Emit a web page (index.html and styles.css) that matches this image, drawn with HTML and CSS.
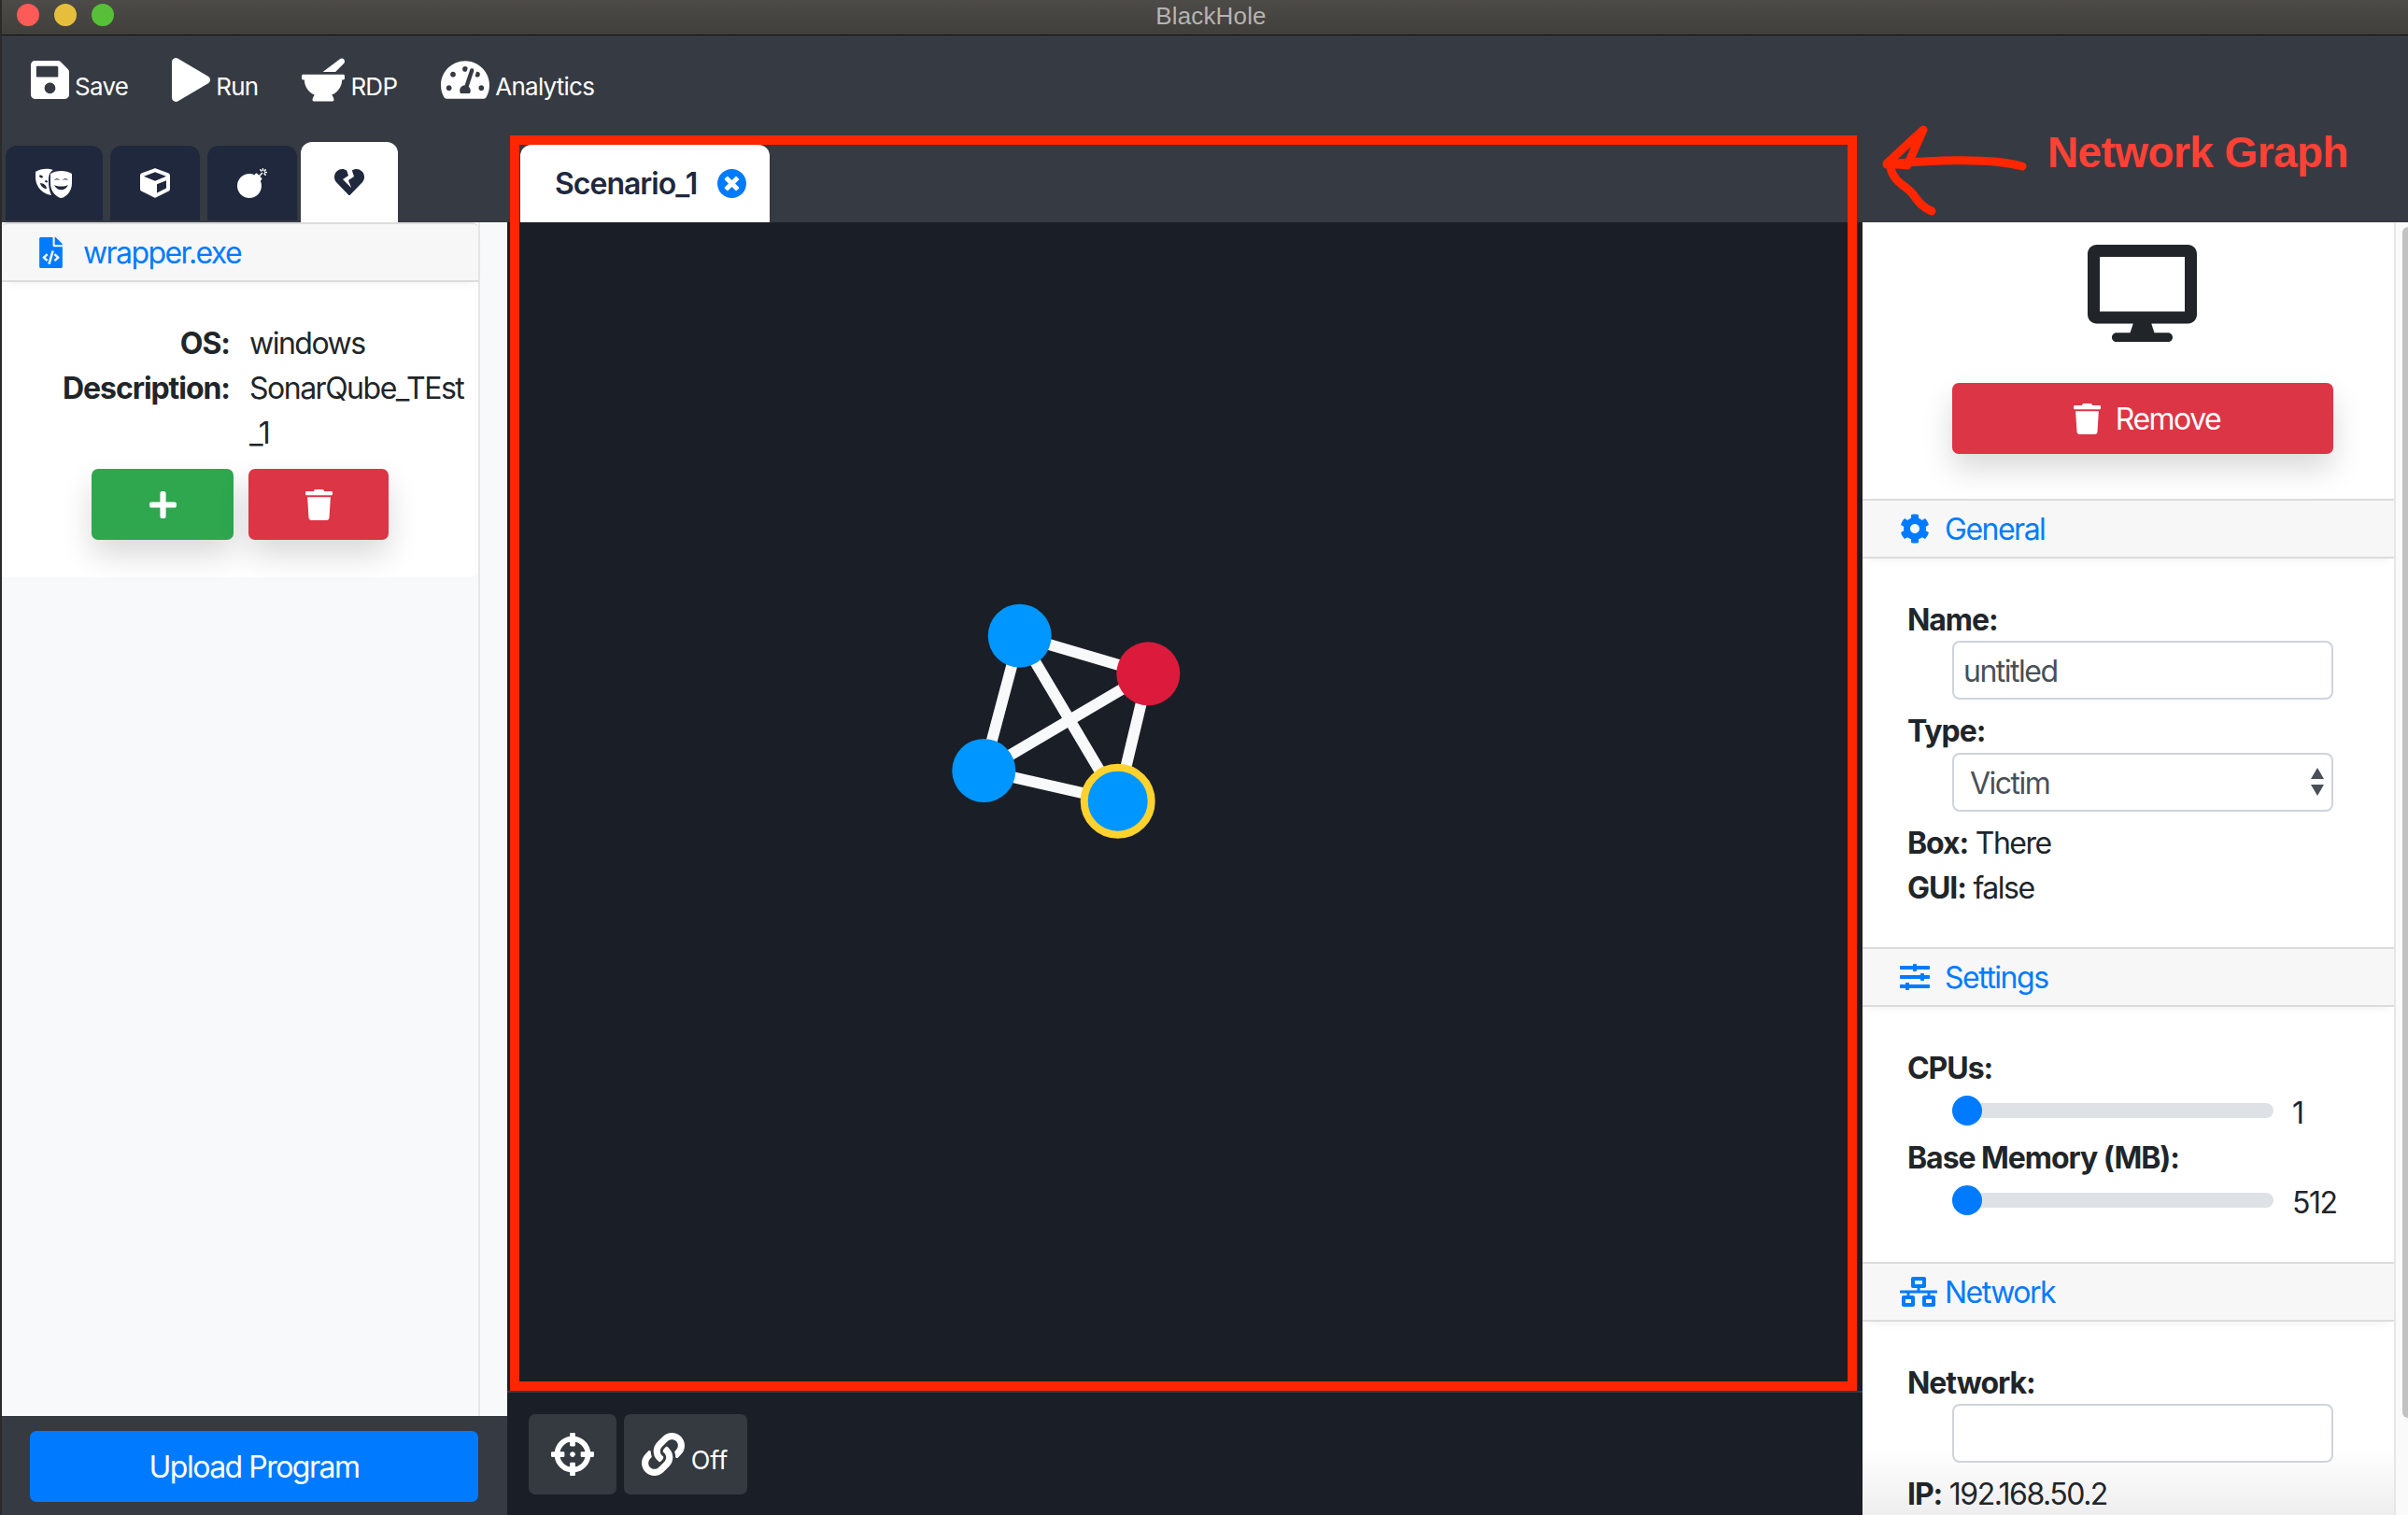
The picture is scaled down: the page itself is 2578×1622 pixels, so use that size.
FILE: index.html
```html
<!DOCTYPE html>
<html lang="en">
<head>
  <meta charset="UTF-8">
  <title>BlackHole</title>
  <link rel="stylesheet" href="styles.css">
</head>
<body>
  <div class="window">
    <div class="titlebar">
      <div class="lights">
        <span class="light red"></span>
        <span class="light yellow"></span>
        <span class="light green"></span>
      </div>
      <div class="title">BlackHole</div>
    </div>

    <div class="toolbar">
      <div class="tool">
        <svg class="tool-icon" width="41" height="47" viewBox="0 0 448 512"><path d="M433.941 129.941l-83.882-83.882A48 48 0 0 0 316.118 32H48C21.49 32 0 53.49 0 80v352c0 26.51 21.49 48 48 48h352c26.51 0 48-21.49 48-48V163.882a48 48 0 0 0-14.059-33.941zM224 416c-35.346 0-64-28.654-64-64 0-35.346 28.654-64 64-64s64 28.654 64 64c0 35.346-28.654 64-64 64zm96-304.52V212c0 6.627-5.373 12-12 12H76c-6.627 0-12-5.373-12-12V108c0-6.627 5.373-12 12-12h228.52c3.183 0 6.235 1.264 8.485 3.515l3.48 3.48A11.996 11.996 0 0 1 320 111.48z"/></svg>
        <span>Save</span>
      </div>
      <div class="tool">
        <svg class="tool-icon" width="41" height="47" viewBox="0 0 448 512"><path d="M424.4 214.7L72.4 6.6C43.8-10.3 0 6.1 0 47.9V464c0 37.5 40.7 60.1 72.4 41.3l352-208c31.4-18.5 31.5-64.1 0-82.6z"/></svg>
        <span>Run</span>
      </div>
      <div class="tool">
        <svg class="tool-icon" width="46" height="47" viewBox="0 0 512 512"><path d="M501.54 60.91c17.22-17.22 12.51-46.25-9.27-57.14a35.696 35.696 0 0 0-37.37 3.37L251.09 160h151.37l99.08-99.09zM496 192H16c-8.84 0-16 7.16-16 16v32c0 8.84 7.16 16 16 16h16c0 80.98 50.2 150.11 121.13 178.32-12.76 16.87-21.72 36.8-24.95 58.69-1.46 9.92 6.04 18.98 16.07 18.98h223.5c10.03 0 17.53-9.06 16.07-18.98-3.22-21.89-12.18-41.82-24.95-58.69C429.8 406.11 480 336.98 480 256h16c8.84 0 16-7.16 16-16v-32c0-8.84-7.16-16-16-16z"/></svg>
        <span>RDP</span>
      </div>
      <div class="tool">
        <svg class="tool-icon" width="52" height="47" viewBox="0 0 576 512"><path d="M288 32C128.94 32 0 160.94 0 320c0 52.8 14.25 102.26 39.06 144.8 5.61 9.62 16.3 15.2 27.44 15.2h443c11.14 0 21.83-5.58 27.44-15.2C561.75 422.26 576 372.8 576 320c0-159.06-128.94-288-288-288zm0 64c14.71 0 26.58 10.13 30.32 23.65-1.11 2.26-2.64 4.23-3.45 6.67l-9.22 27.67c-5.13 3.49-10.97 6.01-17.64 6.01-17.67 0-32-14.33-32-32S270.33 96 288 96zM96 384c-17.67 0-32-14.33-32-32s14.33-32 32-32 32 14.33 32 32-14.33 32-32 32zm48-160c-17.67 0-32-14.33-32-32s14.33-32 32-32 32 14.33 32 32-14.33 32-32 32zm246.77-72.41l-61.33 184C343.13 347.33 352 364.54 352 384c0 11.72-3.38 22.55-8.88 32H232.88c-5.5-9.45-8.88-20.28-8.88-32 0-33.94 26.5-61.43 59.9-63.59l61.34-184.01c4.17-12.56 17.73-19.45 30.36-15.17 12.57 4.19 19.35 17.79 15.17 30.36zm14.66 57.2l15.52-46.55c3.47-1.29 7.13-2.23 11.05-2.23 17.67 0 32 14.33 32 32s-14.33 32-32 32c-11.38-.01-20.89-6.28-26.57-15.22zM480 384c-17.67 0-32-14.33-32-32s14.33-32 32-32 32 14.33 32 32-14.33 32-32 32z"/></svg>
        <span>Analytics</span>
      </div>
    </div>

    <div class="columns">
      <!-- left: programs -->
      <div class="left">
        <div class="side-tabs">
          <div class="side-tab">
            <svg width="40" height="32" viewBox="0 0 40 32"><path fill-rule="evenodd" d="M0 4C6 0 14 0 19 2C15 4 14 8 14 14C14 20 15 25 17 29C8 28 0 20 0 10ZM4 8C4 10 6 11 8 10C8 8 6 7 4 8ZM10 14C10 15 12 16 13 15C13 13 11 12 10 14ZM5 16C6 20 9 22 12 22C12 19 9 16 5 16Z"/><path fill-rule="evenodd" d="M16 6C22 2 33 2 39 6V16C39 25 33 31 27.500 32C22 31 16 25 16 16ZM20 18C23 25 32 25 35 18C31 20 24 20 20 18ZM20 13C21.500 10.500 24.500 10.500 26 13C24 12 22 12 20 13ZM29 13C30.500 10.500 33.500 10.500 35 13C33 12 31 12 29 13Z"/></svg>
          </div>
          <div class="side-tab">
            <svg width="32" height="32" viewBox="0 0 512 512"><path d="M239.1 6.3l-208 78c-18.7 7-31.1 25-31.1 45v225.1c0 18.2 10.3 34.8 26.5 42.9l208 104c13.5 6.8 29.4 6.8 42.9 0l208-104c16.3-8.1 26.5-24.8 26.5-42.9V129.3c0-20-12.4-37.9-31.1-44.9l-208-78C262 2.2 250 2.2 239.1 6.3zM256 68.4l192 72v1.1l-192 78-192-78v-1.1l192-72zm32 356V275.500l160-65v133.900l-160 80z"/></svg>
          </div>
          <div class="side-tab">
            <svg width="32" height="32" viewBox="0 0 512 512"><path d="M440.5 88.5l-52 52L415 167c9.4 9.4 9.4 24.6 0 33.9l-17.4 17.4c11.8 26.1 18.4 55.1 18.4 85.6 0 114.9-93.1 208-208 208S0 418.9 0 304 93.1 96 208 96c30.5 0 59.5 6.6 85.6 18.4L311 97c9.4-9.4 24.6-9.4 33.9 0l26.5 26.5 52-52 17.1 17zM500 60h-24c-6.6 0-12 5.4-12 12s5.4 12 12 12h24c6.6 0 12-5.4 12-12s-5.4-12-12-12zM440 0c-6.6 0-12 5.4-12 12v24c0 6.6 5.4 12 12 12s12-5.4 12-12V12c0-6.6-5.4-12-12-12zm33.9 55l17-17c4.7-4.7 4.7-12.3 0-17-4.7-4.7-12.3-4.7-17 0l-17 17c-4.7 4.7-4.7 12.3 0 17 4.8 4.7 12.4 4.7 17 0zm-67.8 0c4.7 4.7 12.3 4.7 17 0 4.7-4.7 4.7-12.3 0-17l-17-17c-4.7-4.7-12.3-4.7-17 0-4.7 4.7-4.7 12.3 0 17l17 17zm67.8 34c-4.7-4.7-12.3-4.7-17 0-4.7 4.7-4.7 12.3 0 17l17 17c4.7 4.7 12.3 4.7 17 0 4.7-4.7 4.7-12.3 0-17l-17-17z"/></svg>
          </div>
          <div class="side-tab active">
            <svg width="32" height="32" viewBox="0 0 512 512"><path d="M473.7 73.8l-2.4-2.5c-46-47-118-51.7-169.6-14.8L336 159.9l-96 64 48 128-144-144 96-64-28.6-86.5C159.7 19.6 87 24 40.7 71.4l-2.4 2.4C-10.4 123.6-12.5 202.9 31 256l212.1 218.6c7.1 7.3 18.6 7.3 25.7 0L481 255.9c43.5-53 41.4-132.3-7.3-182.1z"/></svg>
          </div>
        </div>

        <div class="side-panel">
          <div class="side-list">
            <div class="program-card">
              <div class="section-head program-head">
                <svg class="blue-icon" width="25" height="33" viewBox="0 0 384 512"><path d="M384 121.941V128H256V0h6.059c6.365 0 12.47 2.529 16.971 7.029l97.941 97.941A24.005 24.005 0 0 1 384 121.941zM248 160c-13.2 0-24-10.800-24-24V0H24C10.745 0 0 10.745 0 24v464c0 13.255 10.745 24 24 24h336c13.255 0 24-10.745 24-24V160H248zM123.206 400.505a5.4 5.4 0 0 1-7.633.246l-64.866-60.812a5.4 5.4 0 0 1 0-7.879l64.866-60.812a5.4 5.4 0 0 1 7.633.246l19.579 20.885a5.4 5.4 0 0 1-.372 7.747L101.650 336l40.763 35.874a5.4 5.4 0 0 1 .372 7.747l-19.579 20.884zm51.295 50.479l-27.453-7.970a5.402 5.402 0 0 1-3.681-6.692l61.440-211.626a5.402 5.402 0 0 1 6.692-3.681l27.452 7.970a5.4 5.4 0 0 1 3.680 6.692l-61.440 211.626a5.397 5.397 0 0 1-6.690 3.681zm160.792-111.045l-64.866 60.812a5.4 5.4 0 0 1-7.633-.246l-19.580-20.885a5.4 5.4 0 0 1 .372-7.747L284.350 336l-40.763-35.874a5.4 5.4 0 0 1-.372-7.747l19.580-20.885a5.4 5.4 0 0 1 7.633-.246l64.866 60.812a5.4 5.4 0 0 1-.001 7.879z"/></svg>
                <span>wrapper.exe</span>
              </div>
              <div class="program-body">
                <div class="info-grid">
                  <b>OS:</b><span>windows</span>
                  <b>Description:</b><span class="breaking">SonarQube_TEst_1</span>
                </div>
                <div class="program-actions">
                  <button class="btn btn-green add-btn">
                    <svg width="29" height="33" viewBox="0 0 448 512"><path d="M416 208H272V64c0-17.670-14.330-32-32-32h-32c-17.670 0-32 14.330-32 32v144H32c-17.670 0-32 14.330-32 32v32c0 17.670 14.330 32 32 32h144v144c0 17.670 14.330 32 32 32h32c17.670 0 32-14.330 32-32V304h144c17.670 0 32-14.330 32-32v-32c0-17.670-14.330-32-32-32z"/></svg>
                  </button>
                  <button class="btn btn-red del-btn">
                    <svg width="29" height="33" viewBox="0 0 448 512"><path d="M432 32H312l-9.400-18.700A24 24 0 0 0 281.100 0H166.800a23.720 23.720 0 0 0-21.400 13.300L136 32H16A16 16 0 0 0 0 48v32a16 16 0 0 0 16 16h416a16 16 0 0 0 16-16V48a16 16 0 0 0-16-16zM53.200 467a48 48 0 0 0 47.900 45h245.800a48 48 0 0 0 47.900-45L416 128H32z"/></svg>
                  </button>
                </div>
              </div>
            </div>
          </div>
        </div>

        <div class="side-footer">
          <button class="btn btn-blue upload-btn">Upload Program</button>
        </div>
      </div>

      <!-- middle: network graph -->
      <div class="middle">
        <div class="scenario-tabs">
          <div class="scenario-tab">
            <span>Scenario_1</span>
            <svg class="blue-icon" width="31" height="31" viewBox="8 8 496 496"><path d="M256 8C119 8 8 119 8 256s111 248 248 248 248-111 248-248S393 8 256 8zm121.600 313.100c4.700 4.700 4.700 12.300 0 17L338 377.600c-4.700 4.700-12.300 4.700-17 0L256 312l-65.100 65.600c-4.700 4.700-12.300 4.700-17 0L134.400 338c-4.700-4.700-4.700-12.300 0-17l65.600-65-65.600-65.100c-4.700-4.700-4.700-12.300 0-17l39.600-39.600c4.700-4.700 12.300-4.700 17 0l65 65.700 65.100-65.600c4.700-4.700 12.300-4.700 17 0l39.600 39.600c4.700 4.700 4.700 12.300 0 17L312 256l65.600 65.100z"/></svg>
          </div>
        </div>
        <div class="graph">
          <svg class="graph-svg">
            <g class="edges">
              <line x1="548.7" y1="442.7" x2="686.3" y2="483.3"/>
              <line x1="548.7" y1="442.7" x2="510.3" y2="587"/>
              <line x1="548.7" y1="442.7" x2="653.7" y2="619.7"/>
              <line x1="686.3" y1="483.3" x2="510.3" y2="587"/>
              <line x1="686.3" y1="483.3" x2="653.7" y2="619.7"/>
              <line x1="510.3" y1="587" x2="653.7" y2="619.7"/>
            </g>
            <circle class="node" cx="548.7" cy="442.7" r="34"/>
            <circle class="node attacker" cx="686.3" cy="483.3" r="34"/>
            <circle class="node" cx="510.3" cy="587" r="34"/>
            <circle class="node selected" cx="653.7" cy="619.7" r="36"/>
          </svg>
        </div>
        <div class="dock">
          <button class="dock-btn">
            <svg width="46" height="46" viewBox="0 0 512 512"><path d="M500 224h-30.364C455.724 130.325 381.675 56.276 288 42.364V12c0-6.627-5.373-12-12-12h-40c-6.627 0-12 5.373-12 12v30.364C130.325 56.276 56.276 130.325 42.364 224H12c-6.627 0-12 5.373-12 12v40c0 6.627 5.373 12 12 12h30.364C56.276 381.675 130.325 455.724 224 469.636V500c0 6.627 5.373 12 12 12h40c6.627 0 12-5.373 12-12v-30.364C381.675 455.724 455.724 381.675 469.636 288H500c6.627 0 12-5.373 12-12v-40c0-6.627-5.373-12-12-12zM288 404.634V364c0-6.627-5.373-12-12-12h-40c-6.627 0-12 5.373-12 12v40.634C165.826 392.232 119.783 346.243 107.366 288H148c6.627 0 12-5.373 12-12v-40c0-6.627-5.373-12-12-12h-40.634C119.768 165.826 165.757 119.783 224 107.366V148c0 6.627 5.373 12 12 12h40c6.627 0 12-5.373 12-12v-40.634C346.174 119.768 392.217 165.757 404.634 224H364c-6.627 0-12 5.373-12 12v40c0 6.627 5.373 12 12 12h40.634C392.232 346.174 346.243 392.217 288 404.634zM288 256c0 17.673-14.327 32-32 32s-32-14.327-32-32c0-17.673 14.327-32 32-32s32 14.327 32 32z"/></svg>
          </button>
          <button class="dock-btn link-btn">
            <svg width="46" height="46" viewBox="0 0 512 512"><path d="M326.612 185.391c59.747 59.809 58.927 155.698.36 214.590-.11.12-.24.25-.36.37l-67.200 67.200c-59.270 59.270-155.699 59.262-214.960 0-59.270-59.260-59.270-155.700 0-214.960l37.106-37.106c9.840-9.840 26.786-3.300 27.294 10.606.648 17.722 3.826 35.527 9.690 52.721 1.986 5.822.567 12.262-3.783 16.612l-13.087 13.087c-28.026 28.026-28.905 73.660-1.155 101.960 28.024 28.579 74.086 28.749 102.325.51l67.200-67.190c28.191-28.191 28.073-73.757 0-101.830-3.701-3.694-7.429-6.564-10.341-8.569a16.037 16.037 0 0 1-6.947-12.606c-.396-10.567 3.348-21.456 11.698-29.806l21.054-21.055c5.521-5.521 14.182-6.199 20.584-1.731a152.482 152.482 0 0 1 20.522 17.197zM467.547 44.449c-59.261-59.262-155.690-59.270-214.960 0l-67.200 67.200c-.12.12-.25.25-.36.37-58.566 58.892-59.387 154.781.36 214.590a152.454 152.454 0 0 0 20.521 17.196c6.402 4.468 15.064 3.789 20.584-1.731l21.054-21.055c8.350-8.350 12.094-19.239 11.698-29.806a16.037 16.037 0 0 0-6.947-12.606c-2.912-2.005-6.640-4.875-10.341-8.569-28.073-28.073-28.191-73.639 0-101.830l67.200-67.190c28.239-28.239 74.300-28.069 102.325.51 27.750 28.300 26.872 73.934-1.155 101.960l-13.087 13.087c-4.350 4.350-5.769 10.790-3.783 16.612 5.864 17.194 9.042 34.999 9.690 52.721.509 13.906 17.454 20.446 27.294 10.606l37.106-37.106c59.271-59.259 59.271-155.699.001-214.959z"/></svg>
            <span>Off</span>
          </button>
        </div>
      </div>

      <!-- right: selected node -->
      <div class="right">
        <div class="right-spacer"></div>
        <div class="right-body">
          <div class="props">
            <div class="props-top">
              <svg class="monitor" width="117" height="104" viewBox="0 0 576 512"><path d="M528 0H48C21.500 0 0 21.500 0 48v320c0 26.500 21.500 48 48 48h192l-16 48h-72c-13.300 0-24 10.700-24 24s10.700 24 24 24h272c13.300 0 24-10.700 24-24s-10.700-24-24-24h-72l-16-48h192c26.500 0 48-21.500 48-48V48c0-26.500-21.500-48-48-48zm-16 352H64V64h448v288z"/></svg>
              <button class="btn btn-red remove-btn">
                <svg width="29" height="33" viewBox="0 0 448 512"><path d="M432 32H312l-9.400-18.700A24 24 0 0 0 281.100 0H166.800a23.720 23.720 0 0 0-21.400 13.300L136 32H16A16 16 0 0 0 0 48v32a16 16 0 0 0 16 16h416a16 16 0 0 0 16-16V48a16 16 0 0 0-16-16zM53.200 467a48 48 0 0 0 47.900 45h245.800a48 48 0 0 0 47.900-45L416 128H32z"/></svg>
                <span>Remove</span>
              </button>
            </div>

            <div class="section-head">
              <span class="head-icon"><svg class="blue-icon" width="32" height="32" viewBox="0 0 512 512"><path d="M487.400 315.700l-42.600-24.600c4.300-23.200 4.300-47 0-70.200l42.600-24.600c4.900-2.800 7.100-8.600 5.500-14-11.100-35.600-30-67.800-54.700-94.600-3.800-4.100-10-5.100-14.800-2.300L380.800 110c-17.900-15.400-38.500-27.300-60.800-35.100V25.800c0-5.600-3.900-10.500-9.400-11.700-36.700-8.200-74.300-7.800-109.200 0-5.500 1.200-9.400 6.100-9.400 11.700V75c-22.200 7.900-42.800 19.800-60.800 35.100L88.700 85.500c-4.900-2.800-11-1.900-14.800 2.300-24.700 26.700-43.600 58.900-54.700 94.600-1.700 5.400.6 11.200 5.500 14L67.300 221c-4.300 23.200-4.300 47 0 70.200l-42.600 24.600c-4.900 2.800-7.100 8.600-5.500 14 11.100 35.600 30 67.800 54.700 94.600 3.800 4.100 10 5.100 14.800 2.300l42.600-24.600c17.900 15.400 38.500 27.300 60.800 35.100v49.200c0 5.600 3.900 10.500 9.400 11.700 36.700 8.200 74.300 7.800 109.200 0 5.500-1.200 9.400-6.100 9.400-11.700v-49.200c22.200-7.900 42.800-19.800 60.800-35.100l42.600 24.600c4.900 2.800 11 1.900 14.800-2.300 24.700-26.700 43.600-58.900 54.700-94.600 1.500-5.500-.7-11.300-5.600-14.100zM256 336c-44.100 0-80-35.900-80-80s35.900-80 80-80 80 35.900 80 80-35.900 80-80 80z"/></svg></span>
              <span>General</span>
            </div>
            <div class="section-body">
              <div class="line"><b>Name:</b></div>
              <input class="control" type="text" value="untitled">
              <div class="line"><b>Type:</b></div>
              <div class="select-wrap">
                <select class="control">
                  <option>Victim</option>
                  <option>Attacker</option>
                </select>
              </div>
              <div class="line"><b>Box:</b> There</div>
              <div class="line"><b>GUI:</b> false</div>
            </div>

            <div class="section-head">
              <span class="head-icon"><svg class="blue-icon" width="32" height="32" viewBox="0 0 512 512"><path d="M496 384H160v-16c0-8.800-7.200-16-16-16h-32c-8.800 0-16 7.200-16 16v16H16c-8.800 0-16 7.200-16 16v32c0 8.800 7.200 16 16 16h80v16c0 8.800 7.200 16 16 16h32c8.800 0 16-7.200 16-16v-16h336c8.800 0 16-7.200 16-16v-32c0-8.800-7.200-16-16-16zm0-160h-80v-16c0-8.800-7.200-16-16-16h-32c-8.800 0-16 7.200-16 16v16H16c-8.800 0-16 7.200-16 16v32c0 8.800 7.200 16 16 16h336v16c0 8.800 7.200 16 16 16h32c8.800 0 16-7.200 16-16v-16h80c8.800 0 16-7.200 16-16v-32c0-8.800-7.200-16-16-16zm0-160H288V48c0-8.800-7.200-16-16-16h-32c-8.800 0-16 7.200-16 16v16H16C7.200 64 0 71.200 0 80v32c0 8.800 7.200 16 16 16h208v16c0 8.800 7.200 16 16 16h32c8.800 0 16-7.200 16-16v-16h208c8.800 0 16-7.200 16-16V80c0-8.800-7.200-16-16-16z"/></svg></span>
              <span>Settings</span>
            </div>
            <div class="section-body">
              <div class="line"><b>CPUs:</b></div>
              <div class="slider-row">
                <input class="slider" type="range" min="1" max="8" value="1">
                <span>1</span>
              </div>
              <div class="line"><b>Base Memory (MB):</b></div>
              <div class="slider-row">
                <input class="slider" type="range" min="512" max="8192" value="512">
                <span>512</span>
              </div>
            </div>

            <div class="section-head">
              <span class="head-icon"><svg class="blue-icon" width="40" height="32" viewBox="0 0 640 512"><path d="M640 264v-16c0-8.840-7.160-16-16-16H344v-40h72c17.670 0 32-14.330 32-32V32c0-17.670-14.330-32-32-32H224c-17.670 0-32 14.330-32 32v128c0 17.670 14.330 32 32 32h72v40H16c-8.840 0-16 7.160-16 16v16c0 8.840 7.160 16 16 16h104v40H64c-17.670 0-32 14.330-32 32v128c0 17.670 14.330 32 32 32h160c17.670 0 32-14.330 32-32V352c0-17.670-14.330-32-32-32h-56v-40h304v40h-56c-17.670 0-32 14.330-32 32v128c0 17.670 14.330 32 32 32h160c17.670 0 32-14.330 32-32V352c0-17.670-14.330-32-32-32h-56v-40h104c8.840 0 16-7.160 16-16zM256 128V64h128v64H256zm-64 320H96v-64h96v64zm352 0h-96v-64h96v64z"/></svg></span>
              <span>Network</span>
            </div>
            <div class="section-body">
              <div class="line"><b>Network:</b></div>
              <input class="control" type="text" value="">
              <div class="line"><b>IP:</b> 192.168.50.2</div>
            </div>
          </div>
          <div class="scroll-track"><div class="scroll-thumb"></div></div>
        </div>
      </div>
    </div>
  </div>

  <!-- annotation drawn over the screenshot -->
  <div class="note-frame"></div>
  <svg class="note-arrow" width="160" height="100" viewBox="2012 132 160 100">
    <path d="M2059 139L2020 175L2042 177L2059 139M2020 176C2060 172 2130 168 2165 178M2024 180C2028 196 2040 198 2048 208C2054 216 2058 222 2068 226"/>
  </svg>
  <div class="note-text">Network Graph</div>
</body>
</html>
```

FILE: styles.css
```css
* {
  box-sizing: border-box;
}
html, body {
  height: 100%;
  overflow: hidden;
}
body {
  margin: 0;
  position: relative;
  font-family: "Inter", "Noto Sans", sans-serif;
  font-size: 32px;
  line-height: 48px;
  letter-spacing: -1.5px;
  color: #212529;
  background: #2a2a2a;
}
svg {
  display: block;
  fill: currentColor;
  flex: none;
}
button {
  font: inherit;
  letter-spacing: inherit;
  border: 0;
  cursor: pointer;
}
b {
  font-weight: 700;
  letter-spacing: -1.05px;
}

.window {
  height: 100vh;
  display: flex;
  flex-direction: column;
  border-left: 2px solid #2a2a2a;
  background: #363a42;
}

/* title bar */
.titlebar {
  height: 38px;
  flex: none;
  display: flex;
  align-items: center;
  justify-content: center;
  position: relative;
  border-bottom: 1px solid #111;
  background: linear-gradient(#4d4b48, #403f3c);
}
.lights {
  position: absolute;
  left: 16px;
  top: 4px;
  display: flex;
  gap: 16px;
}
.light {
  width: 24px;
  height: 24px;
  border-radius: 50%;
}
.light.red { background: #fc5b57; }
.light.yellow { background: #e5bf3c; }
.light.green { background: #57c038; }
.title {
  font-family: "Liberation Sans", sans-serif;
  font-size: 26px;
  line-height: 30px;
  letter-spacing: 0.15px;
  color: #b5b4b2;
  margin-top: -4px;
  padding-left: 13px;
}

/* toolbar */
.toolbar {
  height: 114px;
  flex: none;
  display: flex;
  align-items: flex-start;
  gap: 47px;
  padding: 24px 0 0 31px;
  color: #fff;
  font-size: 26px;
  letter-spacing: -0.75px;
}
.tool {
  display: flex;
  align-items: flex-end;
  gap: 6px;
}
.tool span {
  line-height: 30px;
  margin-bottom: 1px;
}

.columns {
  flex: 1;
  min-height: 0;
  display: flex;
}

/* left column */
.left {
  width: 541px;
  flex: none;
  display: flex;
  flex-direction: column;
}
.side-tabs {
  height: 86px;
  flex: none;
  display: flex;
  align-items: flex-start;
  gap: 8px;
  padding: 4px 0 0 4px;
}
.side-tab {
  width: 96px;
  height: 80px;
  display: flex;
  align-items: center;
  justify-content: center;
  border-radius: 12px 12px 0 0;
  background: #20283d;
  color: #fff;
}
.side-tab:first-child {
  width: 104px;
}
.side-tab.active {
  width: 104px;
  height: 86px;
  margin: -4px 0 0 -4px;
  background: #fff;
  color: #20283d;
}
.side-panel {
  flex: 1;
  min-height: 0;
  background: #f8f9fa;
}
.side-list {
  width: 512px;
  height: 100%;
  border-right: 2px solid #e6e6e6;
}
.program-card {
  background: #fff;
  border-radius: 0 0 10px 0;
}
.section-head {
  display: flex;
  align-items: center;
  height: 64px;
  padding-left: 40px;
  gap: 10px;
  color: #007bff;
  background: #f7f7f7;
  border-top: 2px solid #dcdcdc;
  border-bottom: 2px solid #dcdcdc;
  box-shadow: 0 6px 10px -6px rgba(0, 0, 0, 0.08);
}
.section-head > span:last-child {
  padding-top: 2px;
}
.program-head {
  gap: 22px;
  letter-spacing: -1.6px;
  border-radius: 6px 6px 0 0;
}
.blue-icon {
  color: #007bff;
}
.head-icon {
  width: 38px;
  flex: none;
}
.program-body {
  padding: 40px 0 40px;
}
.info-grid {
  display: grid;
  grid-template-columns: 244px 234px;
  column-gap: 21px;
  padding-top: 2px;
  margin-bottom: 14px;
}
.info-grid b {
  text-align: right;
}
.breaking {
  word-break: break-all;
}
.program-actions {
  display: flex;
  gap: 16px;
  padding-left: 96px;
}
.btn {
  display: flex;
  align-items: center;
  justify-content: center;
  height: 76px;
  border-radius: 7px;
  color: #fff;
}
.btn-green { background: #2ea74f; }
.btn-red { background: #dc3545; }
.btn-blue { background: #007bff; }
.add-btn, .del-btn {
  box-shadow: 0 16px 32px rgba(0, 0, 0, 0.15);
}
.add-btn { width: 152px; }
.del-btn { width: 150px; }
.side-footer {
  height: 106px;
  flex: none;
  padding: 16px 0 0 30px;
}
.upload-btn {
  width: 480px;
  padding-top: 2px;
}

/* middle column */
.middle {
  width: 1451px;
  flex: none;
  display: flex;
  flex-direction: column;
}
.scenario-tabs {
  height: 86px;
  flex: none;
  display: flex;
  align-items: flex-end;
  padding-left: 14px;
}
.scenario-tab {
  width: 267px;
  height: 83px;
  display: flex;
  align-items: center;
  gap: 22px;
  padding: 0 0 0 37px;
  border-radius: 12px 12px 0 0;
  background: #fff;
  color: #20283d;
  font-weight: 600;
  letter-spacing: -1px;
  margin-top: -4px;
}
.graph {
  flex: 1;
  min-height: 0;
  background: #1a1f27;
}
.graph-svg {
  width: 100%;
  height: 100%;
}
.edges line {
  stroke: #f8f9fa;
  stroke-width: 12;
}
.node { fill: #0096ff; }
.node.attacker { fill: #dc1a3c; }
.node.selected {
  stroke: #ffd22e;
  stroke-width: 8;
}
.dock {
  height: 133px;
  flex: none;
  display: flex;
  gap: 8px;
  padding: 23px 0 0 23px;
  background: #1a1f27;
  border-top: 2px solid #343a40;
}
.dock-btn {
  display: flex;
  align-items: center;
  justify-content: center;
  height: 86px;
  width: 94px;
  border-radius: 7px;
  background: #343a40;
  color: #fff;
}
.link-btn {
  width: 132px;
  gap: 7px;
  padding-left: 4px;
  font-size: 27px;
  letter-spacing: 0;
}
.link-btn span {
  line-height: 30px;
  margin-top: 14px;
}

/* right column */
.right {
  flex: 1;
  min-width: 0;
  display: flex;
  flex-direction: column;
}
.right-spacer {
  height: 86px;
  flex: none;
}
.right-body {
  flex: 1;
  min-height: 0;
  display: flex;
  background: #fff;
}
.props {
  width: 571px;
  flex: none;
  overflow: hidden;
  border-right: 2px solid #e6e6e6;
  background: linear-gradient(#fff calc(100% - 70px), #eeeeee);
}
.props-top {
  display: flex;
  flex-direction: column;
  align-items: center;
  padding: 24px 0 48px 30px;
}
.monitor {
  margin-bottom: 44px;
}
.remove-btn {
  width: 408px;
  gap: 16px;
  padding-left: 16px;
  box-shadow: 0 16px 32px rgba(0, 0, 0, 0.15);
}
.remove-btn span {
  padding-top: 2px;
}
.section-body {
  padding: 40px 0 41px 48px;
}
.section-body:last-child {
  padding-bottom: 0;
}
.line {
  height: 48px;
  padding-top: 2px;
}
.control {
  display: block;
  width: 408px;
  height: 63px;
  margin: 0 0 8px 48px;
  padding: 2px 10px 0;
  font: inherit;
  letter-spacing: inherit;
  color: #495057;
  background: #fff;
  border: 2px solid #ced4da;
  border-radius: 8px;
  appearance: none;
  outline: none;
}
.select-wrap {
  position: relative;
  margin-top: 1px;
}
.select-wrap select {
  padding-left: 17px;
}
.select-wrap::before,
.select-wrap::after {
  content: "";
  position: absolute;
  left: 432px;
  border-left: 7px solid transparent;
  border-right: 7px solid transparent;
}
.select-wrap::before {
  top: 16px;
  border-bottom: 12px solid #495057;
}
.select-wrap::after {
  top: 34px;
  border-top: 12px solid #495057;
}
.slider-row {
  display: flex;
  height: 48px;
  gap: 20px;
  padding-left: 48px;
}
.slider-row span {
  padding-top: 2px;
}
.slider {
  width: 344px;
  height: 32px;
  margin: 7px 0 0;
  padding: 0;
  background: transparent;
  appearance: none;
}
.slider::-webkit-slider-runnable-track {
  height: 16px;
  border-radius: 8px;
  background: #dee2e6;
}
.slider::-webkit-slider-thumb {
  appearance: none;
  width: 32px;
  height: 32px;
  margin-top: -8px;
  border-radius: 50%;
  background: #007bff;
}
.scroll-track {
  flex: 1;
  padding-top: 5px;
  display: flex;
  justify-content: flex-end;
  background: #fafafa;
}
.scroll-thumb {
  width: 6px;
  height: 1275px;
  border-radius: 6px 0 0 6px;
  background: #c2c2c2;
}

/* annotation */
.note-frame {
  position: absolute;
  left: 546px;
  top: 145px;
  width: 1442px;
  height: 1344px;
  border: 10px solid #ff2600;
  pointer-events: none;
}
.note-arrow {
  position: absolute;
  left: 2012px;
  top: 132px;
  fill: none;
  stroke: #ff2600;
  stroke-width: 9;
  stroke-linecap: round;
  stroke-linejoin: round;
}
.note-text {
  position: absolute;
  left: 2192px;
  top: 136px;
  font-family: "Liberation Sans", sans-serif;
  font-weight: 700;
  font-size: 46px;
  line-height: 54px;
  letter-spacing: -0.6px;
  color: #ff4136;
}
```
